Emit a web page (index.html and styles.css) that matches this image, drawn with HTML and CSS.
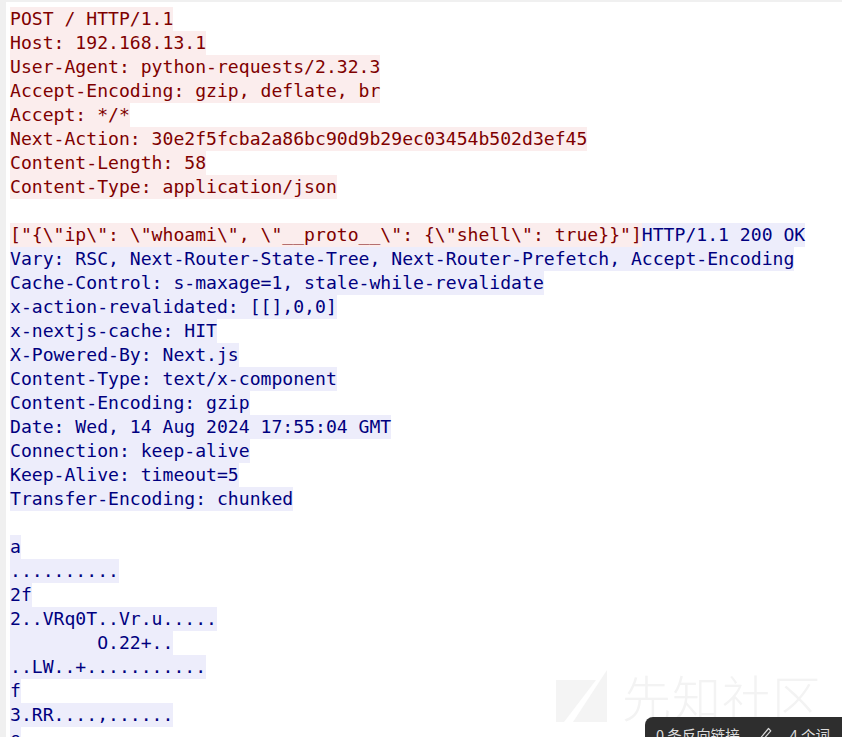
FILE: index.html
```html
<!DOCTYPE html>
<html>
<head>
    <title>TCP Stream</title>
    <link rel="stylesheet" href="styles.css">
</head>
<body>
    <div class="page">
        <div class="stream">
            <div class="ln"><span class="cli">POST / HTTP/1.1</span></div>
            <div class="ln"><span class="cli">Host: 192.168.13.1</span></div>
            <div class="ln"><span class="cli">User-Agent: python-requests/2.32.3</span></div>
            <div class="ln"><span class="cli">Accept-Encoding: gzip, deflate, br</span></div>
            <div class="ln"><span class="cli">Accept: */*</span></div>
            <div class="ln"><span class="cli">Next-Action: 30e2f5fcba2a86bc90d9b29ec03454b502d3ef45</span></div>
            <div class="ln"><span class="cli">Content-Length: 58</span></div>
            <div class="ln"><span class="cli">Content-Type: application/json</span></div>
            <div class="ln"></div>
            <div class="ln"><span class="cli">["{\"ip\": \"whoami\", \"__proto__\": {\"shell\": true}}"]</span><span class="srv">HTTP/1.1 200 OK</span></div>
            <div class="ln"><span class="srv">Vary: RSC, Next-Router-State-Tree, Next-Router-Prefetch, Accept-Encoding</span></div>
            <div class="ln"><span class="srv">Cache-Control: s-maxage=1, stale-while-revalidate</span></div>
            <div class="ln"><span class="srv">x-action-revalidated: [[],0,0]</span></div>
            <div class="ln"><span class="srv">x-nextjs-cache: HIT</span></div>
            <div class="ln"><span class="srv">X-Powered-By: Next.js</span></div>
            <div class="ln"><span class="srv">Content-Type: text/x-component</span></div>
            <div class="ln"><span class="srv">Content-Encoding: gzip</span></div>
            <div class="ln"><span class="srv">Date: Wed, 14 Aug 2024 17:55:04 GMT</span></div>
            <div class="ln"><span class="srv">Connection: keep-alive</span></div>
            <div class="ln"><span class="srv">Keep-Alive: timeout=5</span></div>
            <div class="ln"><span class="srv">Transfer-Encoding: chunked</span></div>
            <div class="ln"></div>
            <div class="ln"><span class="srv">a</span></div>
            <div class="ln"><span class="srv">..........</span></div>
            <div class="ln"><span class="srv">2f</span></div>
            <div class="ln"><span class="srv">2..VRq0T..Vr.u.....</span></div>
            <div class="ln"><span class="srv">        O.22+..</span></div>
            <div class="ln"><span class="srv">..LW..+...........</span></div>
            <div class="ln"><span class="srv">f</span></div>
            <div class="ln"><span class="srv">3.RR....,......</span></div>
            <div class="ln"><span class="srv">e</span></div>
        </div>
    </div>

    <div class="watermark">
        <svg class="wm-logo" width="52" height="54" viewBox="0 0 52 54">
            <polygon points="0,10 40,10 8,52 0,52" fill="#f4f4f4"/>
            <polygon points="51,0 51,52 17,52" fill="#f4f4f4"/>
        </svg>
        <span class="wm-text">先知社区</span>
    </div>

    <div class="statusbar">
        <span>0 条反向链接</span>
        <svg class="pencil" width="14" height="16" viewBox="0 0 14 16">
            <path d="M10.5 1.5 L12.8 3.8 L4.2 13.6 L1.2 14.8 L2 11.6 Z" fill="none" stroke="#d8d8d8" stroke-width="1.2" stroke-linejoin="round"/>
        </svg>
        <span>4 个词</span>
    </div>
</body>
</html>
```

FILE: styles.css
```css
html, body { margin: 0; height: 100%; overflow: hidden; background: #fff; }
.page { box-sizing: border-box; height: 100%; border-top: 2px solid #f0f0f0; border-left: 6px solid #f0f0f0; padding: 5px 0 0 4px; }
.stream { font-family: "DejaVu Sans Mono", "Liberation Mono", monospace; font-size: 18.1px; line-height: 24px; }
.ln { height: 24px; }
.ln span { display: inline-block; vertical-align: top; height: 24px; white-space: pre; }
.cli { color: #7f0000; background: #fbeded; }
.srv { color: #00007f; background: #ededfb; }

.watermark { position: absolute; left: 556px; top: 668px; display: flex; align-items: flex-end; gap: 14px; pointer-events: none; }
.wm-text { font-family: "Noto Sans CJK SC", sans-serif; font-weight: 300; font-size: 49px; line-height: 56px; color: #f3f3f3; letter-spacing: 1px; }

.statusbar { position: absolute; left: 645px; top: 717px; width: 220px; height: 40px; box-sizing: border-box; padding: 8px 0 0 11px; background: #2e2e2e; border-radius: 8px 0 0 0; display: flex; align-items: flex-start; gap: 18px; font-family: "Noto Sans CJK SC", sans-serif; font-size: 14.5px; line-height: 20px; color: #dcdcdc; }
.pencil { margin-top: 2px; }
```
